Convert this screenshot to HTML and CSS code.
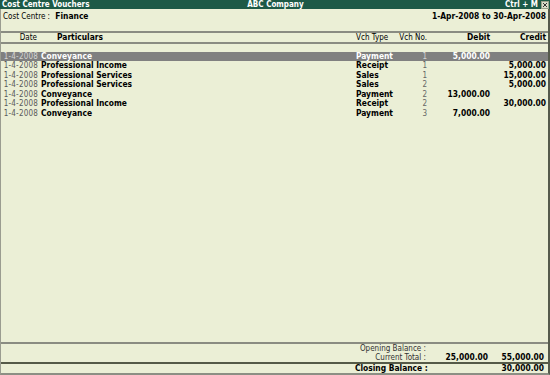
FILE: index.html
```html
<!DOCTYPE html>
<html>
  <head>
    <title>Cost Centre Vouchers</title>
    <link rel="stylesheet" href="styles.css">
  </head>
  <body>
    <div class="window">
      <div class="titlebar">
        <span class="title-left">Cost Centre Vouchers</span>
        <span class="title-center">ABC Company</span>
        <span class="title-right">Ctrl + M
          <svg class="close" width="8" height="8" viewBox="0 0 8 8">
            <rect x="0.5" y="0.5" width="7" height="7" fill="#d8dccb" stroke="#9aa08c"/>
            <path d="M2 2 L6 6 M6 2 L2 6" stroke="#333" stroke-width="1"/>
          </svg>
        </span>
      </div>

      <div class="info">
        <span>Cost Centre : <b class="cc-name">Finance</b></span>
        <b>1-Apr-2008 to 30-Apr-2008</b>
      </div>

      <div class="row head">
        <span class="date">Date</span>
        <span class="part"><b>Particulars</b></span>
        <span class="vtype">Vch Type</span>
        <span class="vno">Vch No.</span>
        <span class="amt"><b>Debit</b></span>
        <span class="amt"><b>Credit</b></span>
      </div>

      <div class="list">
        <div class="row sel">
          <span class="date">1-4-2008</span>
          <span class="part"><b>Conveyance</b></span>
          <span class="vtype"><b>Payment</b></span>
          <span class="vno">1</span>
          <span class="amt"><b>5,000.00</b></span>
          <span class="amt"></span>
        </div>
        <div class="row">
          <span class="date">1-4-2008</span>
          <span class="part"><b>Professional Income</b></span>
          <span class="vtype"><b>Receipt</b></span>
          <span class="vno">1</span>
          <span class="amt"></span>
          <span class="amt"><b>5,000.00</b></span>
        </div>
        <div class="row">
          <span class="date">1-4-2008</span>
          <span class="part"><b>Professional Services</b></span>
          <span class="vtype"><b>Sales</b></span>
          <span class="vno">1</span>
          <span class="amt"></span>
          <span class="amt"><b>15,000.00</b></span>
        </div>
        <div class="row">
          <span class="date">1-4-2008</span>
          <span class="part"><b>Professional Services</b></span>
          <span class="vtype"><b>Sales</b></span>
          <span class="vno">2</span>
          <span class="amt"></span>
          <span class="amt"><b>5,000.00</b></span>
        </div>
        <div class="row">
          <span class="date">1-4-2008</span>
          <span class="part"><b>Conveyance</b></span>
          <span class="vtype"><b>Payment</b></span>
          <span class="vno">2</span>
          <span class="amt"><b>13,000.00</b></span>
          <span class="amt"></span>
        </div>
        <div class="row">
          <span class="date">1-4-2008</span>
          <span class="part"><b>Professional Income</b></span>
          <span class="vtype"><b>Receipt</b></span>
          <span class="vno">2</span>
          <span class="amt"></span>
          <span class="amt"><b>30,000.00</b></span>
        </div>
        <div class="row">
          <span class="date">1-4-2008</span>
          <span class="part"><b>Conveyance</b></span>
          <span class="vtype"><b>Payment</b></span>
          <span class="vno">3</span>
          <span class="amt"><b>7,000.00</b></span>
          <span class="amt"></span>
        </div>
      </div>

      <div class="totals">
        <div class="trow">
          <span class="tlabel">Opening Balance :</span>
          <span class="amt"></span>
          <span class="amt"></span>
        </div>
        <div class="trow">
          <span class="tlabel">Current Total :</span>
          <span class="amt"><b>25,000.00</b></span>
          <span class="amt"><b>55,000.00</b></span>
        </div>
        <div class="trow closing">
          <span class="tlabel"><b>Closing Balance :</b></span>
          <span class="amt"></span>
          <span class="amt"><b>30,000.00</b></span>
        </div>
      </div>
    </div>
  </body>
</html>
```

FILE: styles.css
```css
body {
  margin: 0;
  font-family: "DejaVu Sans Condensed", "DejaVu Sans", sans-serif;
  font-size: 8px;
  color: #000;
  background: #ebefd6;
}

b {
  font-size: 8.4px;
}

.window {
  width: 550px;
  height: 375px;
  box-sizing: border-box;
  display: flex;
  flex-direction: column;
  background: #ebefd6;
  border-left: 1px solid #9a9c90;
  border-right: 2px solid #555a4c;
  border-bottom: 2px solid #8c8f84;
}

.titlebar {
  height: 9px;
  line-height: 9px;
  display: flex;
  justify-content: space-between;
  align-items: center;
  padding: 0 1px 0 2px;
  margin-right: -2px;
  margin-left: -1px;
  background: #1d5a47;
  color: #fff;
  font-weight: bold;
}

.titlebar b,
.titlebar {
  font-size: 8px;
}

.title-left,
.title-right {
  width: 180px;
}

.title-right {
  display: flex;
  justify-content: flex-end;
  align-items: center;
  gap: 3px;
}

.close {
  display: block;
}

.info {
  height: 22px;
  display: flex;
  justify-content: space-between;
  padding: 3px 2px 0 2px;
  box-sizing: border-box;
  line-height: 9px;
}

.cc-name {
  margin-left: 3px;
}

.row {
  display: grid;
  grid-template-columns: 38px 317px 40px 32px 62px 56px;
  height: 9.5px;
  line-height: 9.5px;
  white-space: nowrap;
}

.head {
  height: 9px;
  line-height: 9px;
  border-top: 2px solid #8a8c82;
  border-bottom: 2px solid #8a8c82;
}

.head .part {
  padding-left: 18px;
}

.date {
  text-align: right;
  padding-right: 1px;
  color: #5a5a5a;
  letter-spacing: 0.2px;
}

.head .date {
  color: #000;
  padding-right: 2px;
  letter-spacing: 0;
}

.part {
  padding-left: 2px;
}

.vno {
  text-align: right;
  padding-right: 1px;
  color: #666;
}

.head .vno {
  color: #000;
}

.amt {
  text-align: right;
}

.list {
  flex: 1;
  padding-top: 8px;
}

.sel {
  height: 9px;
  line-height: 9px;
  background: #808080;
  color: #fff;
}

.sel .date,
.sel .vno {
  color: #d4d4d4;
}

.totals {
  border-top: 2px solid #8a8c82;
}

.trow {
  display: grid;
  grid-template-columns: 425px 62px 56px;
  height: 9px;
  line-height: 9px;
  white-space: nowrap;
}

.tlabel {
  text-align: right;
  color: #333;
}

.closing {
  border-top: 2px solid #555a48;
  height: 9px;
}

.closing .tlabel {
  text-align: left;
  padding-left: 354px;
  color: #000;
}
```
